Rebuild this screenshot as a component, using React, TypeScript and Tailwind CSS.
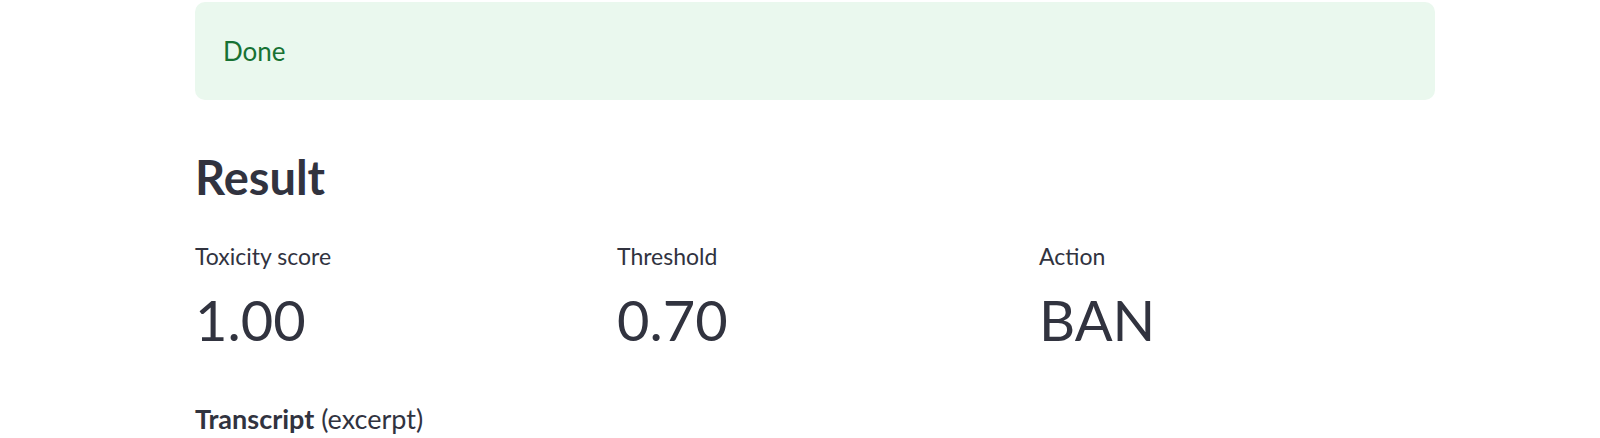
export default function App() {
  const metrics = [
    { label: 'Toxicity score', value: '1.00' },
    { label: 'Threshold', value: '0.70' },
    { label: 'Action', value: 'BAN' },
  ]

  return (
    <div className="h-[438px] w-[1600px] overflow-hidden bg-white text-[#31333f] font-['Lato',sans-serif]">
      <div className="ml-[195px] w-[1240px] pt-[2px]">
        <div className="flex h-[98px] items-center rounded-[10px] bg-[#eaf8ee] px-[28px] text-[26px] text-[#177233]">
          Done
        </div>

        <h3 className="mt-[49px] text-[47px] font-bold leading-[56px]">Result</h3>

        <div className="mt-[37px] grid grid-cols-3 gap-[26px]">
          {metrics.map(m => (
            <div key={m.label}>
              <div className="text-[23px] leading-[28px]">{m.label}</div>
              <div className="mt-[22px] text-[56px] leading-[56px]">{m.value}</div>
            </div>
          ))}
        </div>

        <p className="mt-[56px] text-[27px] leading-[30px]">
          <span className="font-bold">Transcript</span> (excerpt)
        </p>
      </div>
    </div>
  )
}
